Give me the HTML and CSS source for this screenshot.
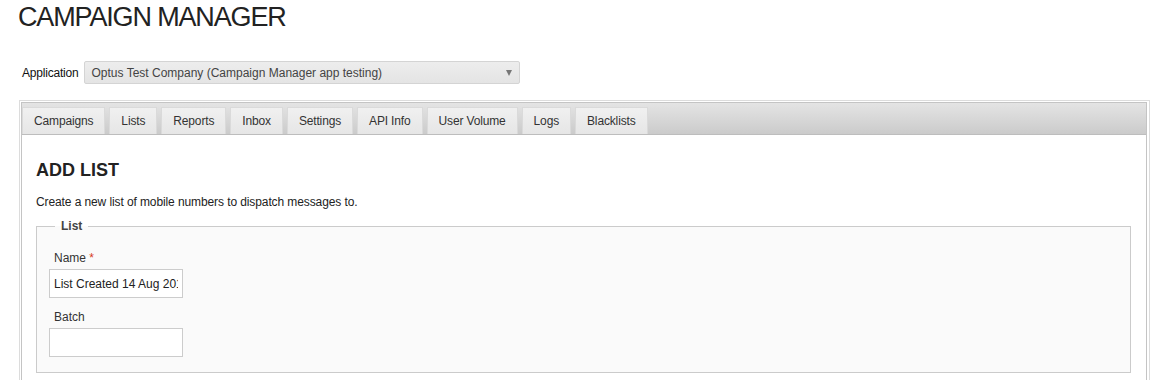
FILE: index.html
```html
<!DOCTYPE html>
<html>
<head>
<meta charset="utf-8">
<link rel="stylesheet" href="styles.css">
</head>
<body>
<h1 class="page-title">CAMPAIGN MANAGER</h1>
<div class="app-row">
  <span class="app-label">Application</span>
  <div class="app-select">
    <span>Optus Test Company (Campaign Manager app testing)</span>
    <span class="caret"></span>
  </div>
</div>
<div class="frame">
  <div class="panel">
    <div class="tabbar">
      <div class="tab">Campaigns</div>
      <div class="tab">Lists</div>
      <div class="tab">Reports</div>
      <div class="tab">Inbox</div>
      <div class="tab">Settings</div>
      <div class="tab">API Info</div>
      <div class="tab">User Volume</div>
      <div class="tab">Logs</div>
      <div class="tab">Blacklists</div>
    </div>
    <div class="content">
      <h2 class="section-title">ADD LIST</h2>
      <p class="desc">Create a new list of mobile numbers to dispatch messages to.</p>
      <fieldset class="box">
        <legend class="box-legend">List</legend>
        <div class="field">
          <label class="field-label">Name <span class="req">*</span></label>
          <input class="field-input" type="text" value="List Created 14 Aug 2015">
        </div>
        <div class="field">
          <label class="field-label">Batch</label>
          <input class="field-input" type="text" value="">
        </div>
      </fieldset>
    </div>
  </div>
</div>
</body>
</html>
```

FILE: styles.css
```css
html, body {
  margin: 0;
  padding: 0;
  background: #fff;
}
body {
  font-family: "Liberation Sans", Arial, Helvetica, sans-serif;
  color: #333;
  padding: 0 0 0 18px;
}
.page-title {
  margin: 0;
  padding-top: 1px;
  font-size: 27px;
  line-height: 32px;
  font-weight: normal;
  color: #222;
  letter-spacing: -1.15px;
}
.app-row {
  display: flex;
  align-items: center;
  margin-top: 28px;
  margin-left: 4px;
  height: 23px;
}
.app-label {
  font-size: 12px;
  color: #111;
  margin-right: 5px;
  letter-spacing: -0.2px;
}
.app-select {
  box-sizing: border-box;
  width: 436px;
  height: 23px;
  display: flex;
  align-items: center;
  justify-content: space-between;
  padding: 0 7px 0 7px;
  border: 1px solid #d4d4d4;
  border-radius: 2px;
  background: linear-gradient(#ededed, #e4e4e4);
  font-size: 12px;
  color: #444;
}
.caret {
  width: 0;
  height: 0;
  border-left: 3.5px solid transparent;
  border-right: 3.5px solid transparent;
  border-top: 6px solid #777;
}
.frame {
  box-sizing: border-box;
  width: 1131px;
  margin-top: 16px;
  margin-left: 1px;
  border: 1px solid #dcdcdc;
  border-bottom: none;
  padding: 1px 2px 0 1px;
  height: 290px;
}
.panel {
  border: 1px solid #c4c4c4;
  border-bottom: none;
  height: 100%;
}
.tabbar {
  display: flex;
  align-items: flex-end;
  height: 31px;
  padding: 0;
  background: linear-gradient(#e4e4e4, #cbcbcb);
  border-bottom: 1px solid #bdbdbd;
}
.tab {
  box-sizing: border-box;
  height: 27px;
  line-height: 27px;
  padding: 0 11px;
  margin-right: 4px;
  font-size: 12px;
  letter-spacing: -0.15px;
  color: #333;
  background: linear-gradient(#f0f0f0, #e6e6e6);
  border: 1px solid #dadada;
  border-bottom: none;
}
.content {
  padding: 25px 15px 0 14px;
}
.section-title {
  margin: 0;
  font-size: 18px;
  line-height: 21px;
  font-weight: bold;
  color: #222;
}
.desc {
  margin: 14px 0 0;
  font-size: 12px;
  line-height: 14px;
  color: #222;
  letter-spacing: -0.1px;
}
.box {
  margin: 10px 0 0;
  padding: 18px 12px 15px 12px;
  border: 1px solid #cbcbcb;
  background: #fafafa;
}
.box-legend {
  font-size: 12px;
  font-weight: bold;
  color: #444;
  padding: 0 6px;
  margin-left: 6px;
}
.field {
  display: flex;
  flex-direction: column;
  align-items: flex-start;
}
.field + .field {
  margin-top: 12px;
}
.field-label {
  font-size: 12px;
  line-height: 14px;
  color: #333;
  margin-left: 5px;
  margin-bottom: 4px;
}
.req {
  color: #d63b1c;
}
.field-input {
  box-sizing: border-box;
  width: 134px;
  height: 29px;
  border: 1px solid #ccc;
  background: #fff;
  padding: 0 4px;
  font-family: "Liberation Sans", Arial, Helvetica, sans-serif;
  font-size: 12px;
  color: #222;
  outline: none;
}
```
